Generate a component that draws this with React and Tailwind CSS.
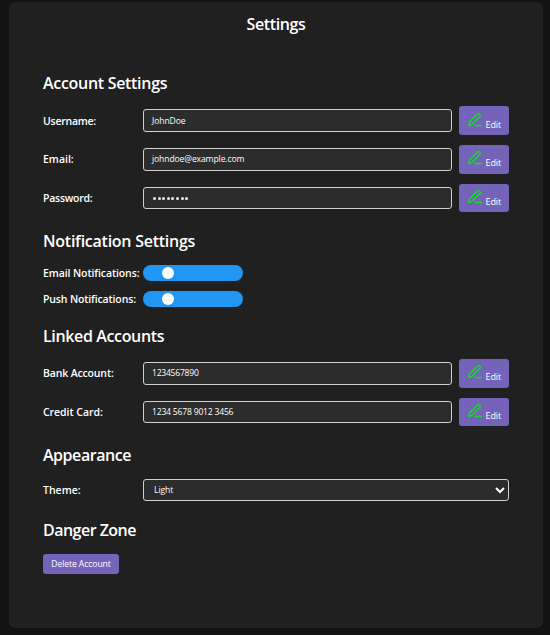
import React from 'react';

function EditIcon() {
  return (
    <svg viewBox="0 0 16 16" className="block h-4 w-4 shrink-0" fill="none" stroke="#08e51b" strokeWidth="1.4" strokeLinecap="round" strokeLinejoin="round">
      <path d="M8.2 13.5h6.1" />
      <path d="M10.4 2.2a1.65 1.65 0 0 1 2.4 2.4L5 12.4 1.7 13.5l.8-3.4z" />
    </svg>
  );
}

function EditButton({ className }) {
  return (
    <button className={`ml-[7px] flex w-[50px] shrink-0 rounded-[3px] bg-[#7463b8] pl-2 text-white ${className}`}>
      <EditIcon />
      <span className="ml-[2.5px] mt-[7px] text-[9px] leading-3 tracking-[-0.1px]">Edit</span>
    </button>
  );
}

function Heading({ children, className }) {
  return <h2 className={`h-6 whitespace-nowrap text-[16px] font-semibold leading-6 ${className}`}>{children}</h2>;
}

function Label({ children, className = '' }) {
  return <span className={`w-[100px] shrink-0 whitespace-nowrap text-[10.5px] font-semibold leading-4 ${className}`}>{children}</span>;
}

function Field({ label, labelClass, value, valueClass = '', boxClass = 'h-[23px]', rowClass = 'h-[29px]', buttonClass = 'h-[29px] pt-[5px]', password = false }) {
  return (
    <div className={`flex items-center ${rowClass}`}>
      <Label className={labelClass}>{label}</Label>
      <div className={`flex flex-1 items-center rounded-[3px] border border-[#d0d0d0] bg-[#2c2c2c] pl-2 text-[8.6px] leading-3 ${boxClass}`}>
        {password ? (
          <div className="flex gap-[1.6px] pl-[1px] pt-[1px]">
            {[0, 1, 2, 3, 4, 5, 6, 7].map((i) => <span key={i} className="h-[3px] w-[3px] rounded-full bg-[#eeeeee]" />)}
          </div>
        ) : (
          <span className={`whitespace-nowrap ${valueClass}`}>{value}</span>
        )}
      </div>
      <EditButton className={buttonClass} />
    </div>
  );
}

function Toggle({ label, labelClass }) {
  return (
    <div className="flex h-4 items-center">
      <Label className={labelClass}>{label}</Label>
      <div className="flex h-4 w-[100px] items-center rounded-full bg-[#2196f3] pl-[19px]">
        <span className="h-3 w-3 rounded-full bg-white" />
      </div>
    </div>
  );
}

export default function App() {
  return (
    <div className="h-[635px] w-[550px] overflow-hidden bg-[#121212] pl-[9px] pt-[2px] font-['Trebuchet_MS','Open_Sans',sans-serif] text-white">
      <main className="h-[626px] w-[534px] rounded-[6px] bg-[#202020] px-[34px] pt-[10px]">
        <h1 className="h-6 text-center text-[16px] font-semibold leading-6 tracking-[-0.4px]">Settings</h1>
        <Heading className="mt-[35px] tracking-[-0.3px]">Account Settings</Heading>
        <div className="mt-[11px] flex flex-col gap-[10px]">
          <Field label="Username:" labelClass="tracking-[-0.25px]" value="JohnDoe" valueClass="tracking-[-0.1px]" buttonClass="h-[29px] pt-[6px]" />
          <Field label="Email:" labelClass="pb-[2px]" value="johndoe@example.com" valueClass="pb-[2px] tracking-[-0.12px]" />
          <Field label="Password:" labelClass="tracking-[-0.25px]" password rowClass="h-[28px]" boxClass="h-[22px]" buttonClass="h-[28px] pt-[5px]" />
        </div>
        <Heading className="mt-[17px] tracking-[-0.25px]">Notification Settings</Heading>
        <div className="mt-[12px] flex flex-col gap-[10px]">
          <Toggle label="Email Notifications:" labelClass="tracking-[-0.1px]" />
          <Toggle label="Push Notifications:" labelClass="tracking-[-0.14px]" />
        </div>
        <Heading className="mt-[17px] tracking-[-0.36px]">Linked Accounts</Heading>
        <div className="mt-[11px] flex flex-col gap-[10px]">
          <Field label="Bank Account:" labelClass="pb-[2px] tracking-[-0.15px]" value="1234567890" valueClass="pb-[2px] tracking-[-0.26px]" />
          <Field label="Credit Card:" labelClass="tracking-[-0.04px]" value="1234 5678 9012 3456" valueClass="tracking-[-0.21px]" rowClass="h-[28px]" boxClass="h-[22px]" buttonClass="h-[28px] pt-[5px]" />
        </div>
        <Heading className="mt-[17px] tracking-[-0.46px]">Appearance</Heading>
        <div className="mt-[12px] flex h-[22px] items-center">
          <Label>Theme:</Label>
          <div className="flex h-[22px] flex-1 items-center justify-between rounded-[3px] border border-[#d0d0d0] bg-[#2c2c2c] pl-[10px] pr-[3px] text-[8.6px] leading-3">
            <span className="tracking-[-0.1px]">Light</span>
            <svg viewBox="0 0 10 8" className="h-2 w-[10px]" fill="none" stroke="white" strokeWidth="2">
              <path d="m1 2 4 4 4-4" />
            </svg>
          </div>
        </div>
        <Heading className="mt-[17px] tracking-[-0.52px]">Danger Zone</Heading>
        <button className="mt-[12px] flex h-5 w-[76px] items-center justify-center whitespace-nowrap rounded-[3px] bg-[#7463b8] text-[8.6px] leading-3 tracking-[-0.08px]">Delete Account</button>
      </main>
    </div>
  );
}
